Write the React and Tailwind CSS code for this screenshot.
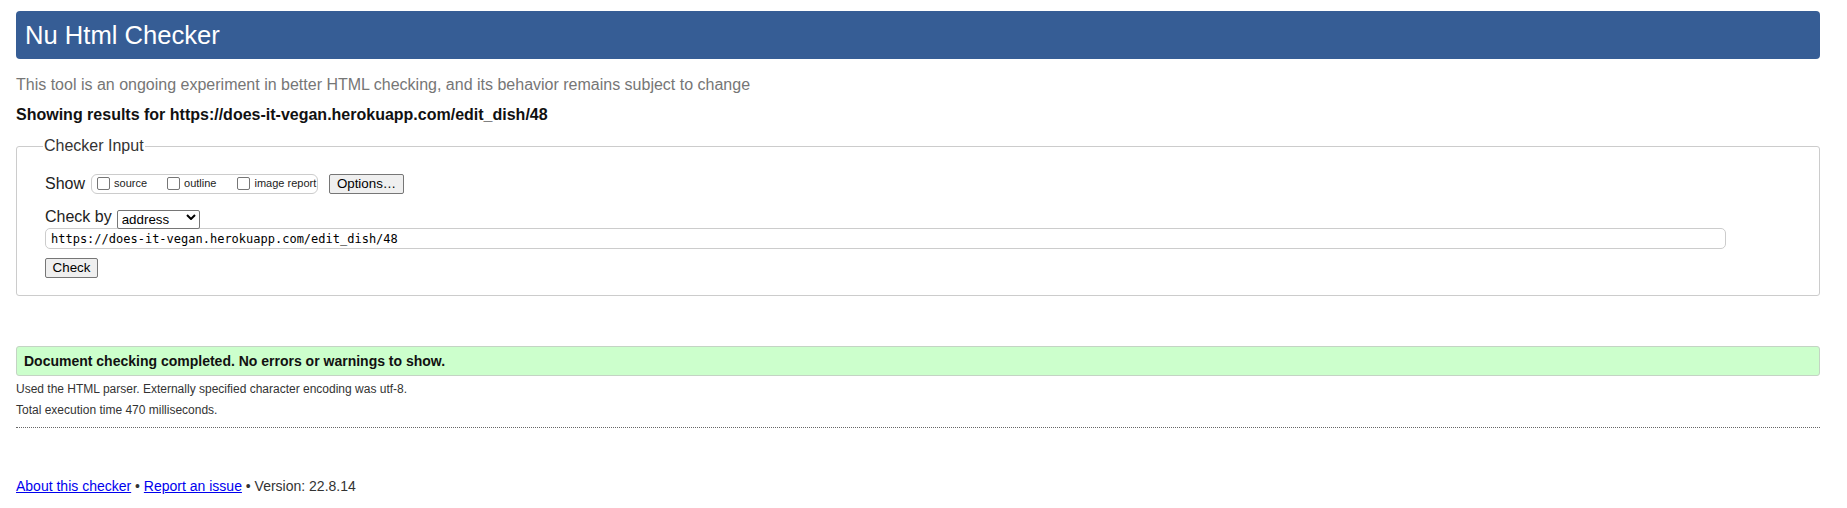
import React from "react";

function Checkbox({ label, className = "" }) {
  return (
    <label className={`flex items-center ${className}`}>
      <input
        type="checkbox"
        className="appearance-none m-0 w-[13px] h-[13px] border border-[#767676] rounded-[2px] bg-white"
      />
      <span className="ml-[4px] text-[11px] leading-[13px] text-[#222]">{label}</span>
    </label>
  );
}

export default function App() {
  return (
    <div className="min-h-screen bg-white pl-[16px] pr-[27px] pt-[11px] font-['Liberation_Sans',Arial,sans-serif] text-[#222]">
      <h1 className="h-[48px] flex items-center rounded-[4px] bg-[#365d95] pl-[9px] text-[25.6px] font-normal text-white">
        Nu Html Checker
      </h1>

      <p className="mt-[16px] text-[16px] leading-[20px] text-[#767676]">
        This tool is an ongoing experiment in better HTML checking, and its behavior remains subject to change
      </p>
      <p className="mt-[10px] text-[16px] leading-[20px] font-bold text-[#111]">
        Showing results for https://does-it-vegan.herokuapp.com/edit_dish/48
      </p>

      <fieldset className="mt-[12px] border border-[#ccc] rounded-[3px] pl-[28px] pr-[28px] pt-[18px] pb-[17px]">
        <legend className="ml-[-2px] px-[1px] text-[16px] leading-[18px] text-[#333]">Checker Input</legend>

        <div className="flex items-center h-[21px]">
          <span className="text-[16px] text-[#222]">Show</span>
          <div className="ml-[6px] flex items-center h-[20px] w-[227px] border border-[#ccc] rounded-[6px] pl-[5px]">
            <Checkbox label="source" />
            <Checkbox label="outline" className="ml-[20px]" />
            <Checkbox label="image report" className="ml-[21px]" />
          </div>
          <button
            type="button"
            className="ml-[11px] w-[75px] h-[20px] border border-[#767676] bg-[#efefef] rounded-[2px] text-[13.33px] leading-[18px] text-black"
          >
            Options…
          </button>
        </div>

        <div className="mt-[13px] flex items-center h-[19px]">
          <span className="text-[16px] text-[#222]">Check by</span>
          <div className="relative ml-[5px] w-[83px] h-[19px]">
            <select className="appearance-none w-full h-full border border-[#767676] rounded-[2px] bg-white pl-[4px] text-[13.33px] leading-[17px] text-black">
              <option>address</option>
            </select>
            <svg
              className="pointer-events-none absolute left-[69px] top-[7px]"
              width="10"
              height="6"
              viewBox="0 0 10 6"
              fill="none"
            >
              <path d="M1 1 L5 5 L9 1" stroke="#000" strokeWidth="2" />
            </svg>
          </div>
        </div>

        <input
          type="text"
          readOnly
          value="https://does-it-vegan.herokuapp.com/edit_dish/48"
          className="mt-[2px] block w-[1681px] h-[21px] border border-[#ccc] rounded-[5px] pl-[5px] font-['DejaVu_Sans_Mono',monospace] text-[12px] text-black outline-none"
        />

        <button
          type="button"
          className="mt-[9px] block w-[53px] h-[20px] border border-[#767676] bg-[#efefef] rounded-[2px] text-[13.33px] leading-[18px] text-black"
        >
          Check
        </button>
      </fieldset>

      <div className="mt-[50px] h-[30px] flex items-center border border-[#c4d4c4] rounded-[3px] bg-[#ccffcc] pl-[7px]">
        <p className="text-[14px] font-bold text-[#111]">
          Document checking completed. No errors or warnings to show.
        </p>
      </div>

      <div className="mt-[3px] text-[12px] leading-[21px] text-[#333]">
        <p>Used the HTML parser. Externally specified character encoding was utf-8.</p>
        <p>Total execution time 470 milliseconds.</p>
      </div>

      <hr className="mt-[6px] border-0 border-t border-dotted border-[#666]" />

      <p className="mt-[48px] text-[14px] text-[#333]">
        <a href="#" className="text-[#0000ee] underline">About this checker</a>
        {" • "}
        <a href="#" className="text-[#0000ee] underline">Report an issue</a>
        {" • Version: 22.8.14"}
      </p>
    </div>
  );
}
